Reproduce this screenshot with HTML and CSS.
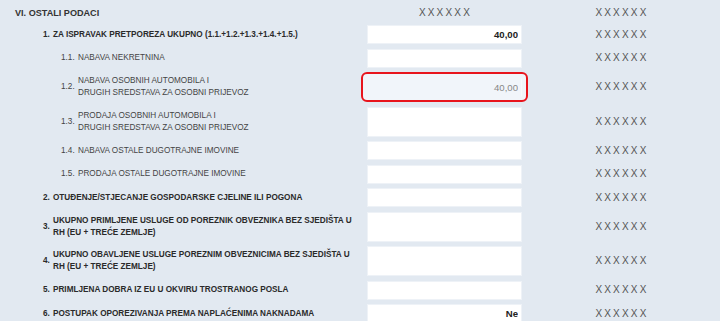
FILE: index.html
```html
<!DOCTYPE html>
<html lang="hr">
<head>
    <meta charset="UTF-8">
    <title>Ostali podaci</title>
    <link rel="stylesheet" href="styles.css">
</head>
<body>
    <div class="form">
        <div class="row head">
            <div class="label section">VI. OSTALI PODACI</div>
            <div class="xx">XXXXXX</div>
            <div class="xx">XXXXXX</div>
        </div>

        <div class="row">
            <div class="label lvl1 bold"><span class="num">1.</span><span>ZA ISPRAVAK PRETPOREZA UKUPNO (1.1.+1.2.+1.3.+1.4.+1.5.)</span></div>
            <div class="cell"><input class="field strong" value="40,00"></div>
            <div class="xx">XXXXXX</div>
        </div>

        <div class="row">
            <div class="label lvl2"><span class="num">1.1.</span><span>NABAVA NEKRETNINA</span></div>
            <div class="cell"><input class="field"></div>
            <div class="xx">XXXXXX</div>
        </div>

        <div class="row">
            <div class="label lvl2"><span class="num">1.2.</span><span>NABAVA OSOBNIH AUTOMOBILA I<br>DRUGIH SREDSTAVA ZA OSOBNI PRIJEVOZ</span></div>
            <div class="cell">
                <div class="focus-box"><input class="field locked" value="40,00" readonly></div>
            </div>
            <div class="xx">XXXXXX</div>
        </div>

        <div class="row">
            <div class="label lvl2"><span class="num">1.3.</span><span>PRODAJA OSOBNIH AUTOMOBILA I<br>DRUGIH SREDSTAVA ZA OSOBNI PRIJEVOZ</span></div>
            <div class="cell"><input class="field tall"></div>
            <div class="xx">XXXXXX</div>
        </div>

        <div class="row">
            <div class="label lvl2"><span class="num">1.4.</span><span>NABAVA OSTALE DUGOTRAJNE IMOVINE</span></div>
            <div class="cell"><input class="field"></div>
            <div class="xx">XXXXXX</div>
        </div>

        <div class="row">
            <div class="label lvl2"><span class="num">1.5.</span><span>PRODAJA OSTALE DUGOTRAJNE IMOVINE</span></div>
            <div class="cell"><input class="field"></div>
            <div class="xx">XXXXXX</div>
        </div>

        <div class="row">
            <div class="label lvl1 bold"><span class="num">2.</span><span>OTUĐENJE/STJECANJE GOSPODARSKE CJELINE ILI POGONA</span></div>
            <div class="cell"><input class="field"></div>
            <div class="xx">XXXXXX</div>
        </div>

        <div class="row">
            <div class="label lvl1 bold"><span class="num">3.</span><span>UKUPNO PRIMLJENE USLUGE OD POREZNIK OBVEZNIKA BEZ SJEDIŠTA U<br>RH (EU + TREĆE ZEMLJE)</span></div>
            <div class="cell"><input class="field tall"></div>
            <div class="xx">XXXXXX</div>
        </div>

        <div class="row">
            <div class="label lvl1 bold"><span class="num">4.</span><span>UKUPNO OBAVLJENE USLUGE POREZNIM OBVEZNICIMA BEZ SJEDIŠTA U<br>RH (EU + TREĆE ZEMLJE)</span></div>
            <div class="cell"><input class="field tall"></div>
            <div class="xx">XXXXXX</div>
        </div>

        <div class="row">
            <div class="label lvl1 bold"><span class="num">5.</span><span>PRIMLJENA DOBRA IZ EU U OKVIRU TROSTRANOG POSLA</span></div>
            <div class="cell"><input class="field"></div>
            <div class="xx">XXXXXX</div>
        </div>

        <div class="row">
            <div class="label lvl1 bold"><span class="num">6.</span><span>POSTUPAK OPOREZIVANJA PREMA NAPLAĆENIMA NAKNADAMA</span></div>
            <div class="cell"><input class="field strong" value="Ne"></div>
            <div class="xx">XXXXXX</div>
        </div>
    </div>
</body>
</html>
```

FILE: styles.css
```css
body {
    margin: 0;
    background-color: #e2e9f1;
    font-family: 'Liberation Sans', Arial, sans-serif;
    color: #333;
}

.form {
    display: flex;
    flex-direction: column;
    gap: 4.5px;
}

.row {
    display: grid;
    grid-template-columns: 367px 155px 1fr;
    align-items: center;
}

.head {
    box-sizing: border-box;
    height: 20.5px;
    padding-top: 5px;
}

.label {
    display: flex;
    align-items: center;
    font-size: 8.2px;
    line-height: 12px;
    color: #444;
}

.section {
    padding-left: 15px;
    font-size: 9.1px;
    font-weight: bold;
    color: #333;
}

.bold {
    font-weight: bold;
    color: #2a2a2a;
}

.lvl1 {
    padding-left: 43px;
}

.lvl1 .num {
    width: 10px;
    flex-shrink: 0;
}

.lvl2 {
    padding-left: 61px;
}

.lvl2 .num {
    width: 17px;
    flex-shrink: 0;
}

.cell {
    height: 100%;
    display: flex;
    align-items: center;
}

.field {
    box-sizing: border-box;
    width: 155px;
    height: 19px;
    margin: 0;
    padding: 0 3px;
    border: 1px solid #eef2f7;
    background: #fff;
    font-family: 'Liberation Sans', Arial, sans-serif;
    font-size: 9.6px;
    text-align: right;
    color: #222;
    outline: none;
}

.tall {
    height: 30px;
}

.strong {
    font-weight: bold;
}

.focus-box {
    margin: 0 -6px;
    padding: 3px 4px;
    border: 2px solid #e8141c;
    border-radius: 6px;
    background: #f1f5fa;
}

.locked {
    background: #f1f5fa;
    border-color: #f1f5fa #f8fafd #f1f5fa #f1f5fa;
    color: #888;
}

.xx {
    text-align: center;
    padding-left: 2px;
    font-size: 10px;
    letter-spacing: 2.2px;
    color: #555;
    line-height: 12px;
}
```
